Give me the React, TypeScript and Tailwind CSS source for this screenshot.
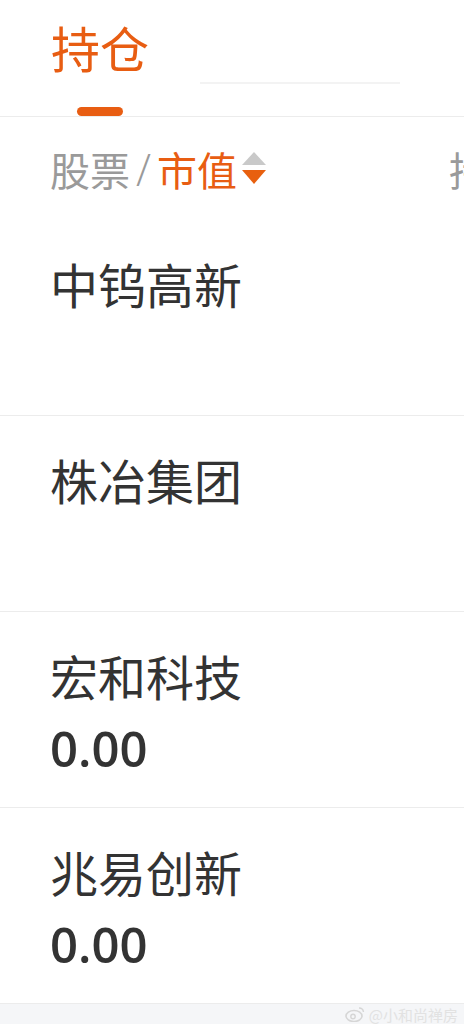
import React from 'react';

type Holding = {
    name: string;
    value?: string;
};

const holdings: Holding[] = [
    { name: '中钨高新' },
    { name: '株冶集团' },
    { name: '宏和科技', value: '0.00' },
    { name: '兆易创新', value: '0.00' }
];

const cjk = { fontFamily: '"Noto Sans CJK SC", "Noto Sans", sans-serif' };
const num = { fontFamily: '"Open Sans", "Noto Sans", sans-serif' };

const SortIcon = () => (
    <svg width="26" height="34" viewBox="0 0 26 34" className="ml-[4px] -mt-[3px]">
        <path d="M13 1 L25 14 L1 14 Z" fill="#c9c9c9" />
        <path d="M1 19 L25 19 L13 33 Z" fill="#e8600f" />
    </svg>
);

const HoldingRow = ({ item }: { item: Holding }) => (
    <div className="h-[196px] shrink-0 border-b border-[#ececec] pl-[50px] flex flex-col">
        <div className="mt-[35px] h-[56px] flex items-center text-[48px] leading-none text-[#333333]" style={cjk}>
            {item.name}
        </div>
        {item.value && (
            <div className="mt-[15px] h-[60px] flex items-center text-[49px] leading-none font-semibold text-[#333333]" style={num}>
                {item.value}
            </div>
        )}
    </div>
);

export default function App() {
    return (
        <div className="w-[464px] h-[1024px] overflow-hidden bg-white flex flex-col" style={cjk}>
            {/* tab bar */}
            <div className="h-[117px] shrink-0 border-b border-[#ececec] flex pl-[50px]">
                <div className="w-[100px] flex flex-col items-center">
                    <div className="mt-[20px] h-[52px] flex items-center text-[49px] leading-none text-[#e85d12]">持仓</div>
                    <div className="mt-[35px] w-[46px] h-[9px] rounded-full bg-[#e85d12]" />
                </div>
                <div className="ml-[50px] mt-[82px] w-[200px] h-[2px] bg-[#f3f3f3]" />
            </div>

            {/* column header */}
            <div className="h-[103px] shrink-0 flex items-start overflow-hidden whitespace-nowrap">
                <div className="w-[449px] shrink-0 pl-[50px] mt-[31px] h-[42px] flex items-center text-[40px] leading-none">
                    <span className="text-[#9a9a9a]">股票</span>
                    <span className="text-[#9a9a9a] text-[44px] mx-[6px] font-light" style={num}>/</span>
                    <span className="text-[#e85d12]">市值</span>
                    <SortIcon />
                </div>
                <div className="mt-[31px] h-[42px] flex items-center text-[40px] leading-none text-[#9a9a9a]">持仓/盈亏</div>
            </div>

            {holdings.map(item => (
                <HoldingRow key={item.name} item={item} />
            ))}

            {/* bottom strip with watermark */}
            <div className="flex-1 bg-[#f5f6f8] flex justify-end items-start pr-[6px] pt-[2px]">
                <div className="flex items-center gap-[4px] text-[15px] leading-none text-[#e2e2e2]" style={cjk}>
                    <svg width="20" height="16" viewBox="0 0 20 16">
                        <ellipse cx="9" cy="10" rx="8" ry="5.5" fill="none" stroke="#d6d6d6" strokeWidth="1.6" />
                        <circle cx="8" cy="10.5" r="2.2" fill="none" stroke="#d6d6d6" strokeWidth="1.4" />
                        <path d="M14 2 Q18 2 18.5 6" fill="none" stroke="#d6d6d6" strokeWidth="1.4" />
                    </svg>
                    <span>@小和尚禅房</span>
                </div>
            </div>
        </div>
    );
}
